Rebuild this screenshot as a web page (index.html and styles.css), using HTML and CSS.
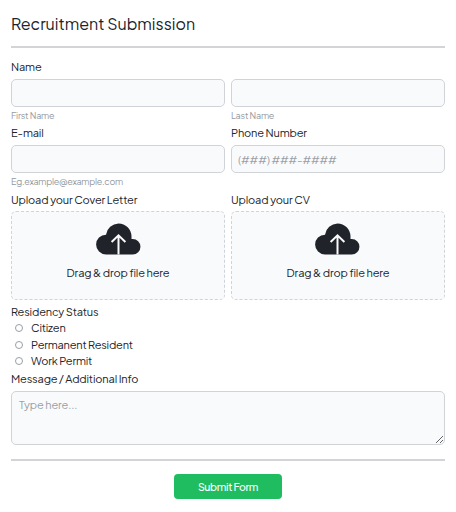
FILE: index.html
```html
<!DOCTYPE html>
<html lang="en">
<head>
    <meta charset="UTF-8">
    <meta name="viewport" content="width=device-width, initial-scale=1.0">
    <title>Recruitment Submission</title>
    <link rel="stylesheet" href="styles.css">
</head>
<body>

<form class="container">
    <h1>Recruitment Submission</h1>
    <hr>

    <div class="row names">
        <div class="field">
            <label for="firstName">Name</label>
            <input type="text" id="firstName">
            <small>First Name</small>
        </div>
        <div class="field">
            <label for="lastName">&nbsp;</label>
            <input type="text" id="lastName">
            <small>Last Name</small>
        </div>
    </div>

    <div class="row contact">
        <div class="field">
            <label for="email">E-mail</label>
            <input type="email" id="email">
            <small class="hint-email">Eg.example@example.com</small>
        </div>
        <div class="field">
            <label for="phone">Phone Number</label>
            <input type="tel" id="phone" placeholder="(###) ###-####">
        </div>
    </div>

    <div class="row uploads">
        <div class="field">
            <label>Upload your Cover Letter</label>
            <div class="dropzone">
                <svg class="cloud" viewBox="0 0 45 32">
                    <path fill="#20232a" d="M10 31.5A9.9 9.9 0 0 1 10 11.7A13 13 0 0 1 22.5 .5A13 13 0 0 1 35.5 13.5V16H36.7A7.75 7.75 0 0 1 36.7 31.5Z"/>
                    <path fill="none" stroke="#f9fafc" stroke-width="2" d="M22.5 31.5V12.5M15.6 19L22.5 12.3L29.4 19"/>
                </svg>
                <span>Drag &amp; drop file here</span>
            </div>
        </div>
        <div class="field">
            <label>Upload your CV</label>
            <div class="dropzone">
                <svg class="cloud cloud-cv" viewBox="0 0 45 32">
                    <path fill="#20232a" d="M10 31.5A9.9 9.9 0 0 1 10 11.7A13 13 0 0 1 22.5 .5A13 13 0 0 1 35.5 13.5V16H36.7A7.75 7.75 0 0 1 36.7 31.5Z"/>
                    <path fill="none" stroke="#f9fafc" stroke-width="2" d="M22.5 31.5V12.5M15.6 19L22.5 12.3L29.4 19"/>
                </svg>
                <span>Drag &amp; drop file here</span>
            </div>
        </div>
    </div>

    <div class="residency">
        <label>Residency Status</label>
        <div class="option"><input type="radio" name="status" id="citizen"><label for="citizen">Citizen</label></div>
        <div class="option"><input type="radio" name="status" id="resident"><label for="resident">Permanent Resident</label></div>
        <div class="option"><input type="radio" name="status" id="permit"><label for="permit">Work Permit</label></div>
    </div>

    <div class="field">
        <label for="message">Message / Additional Info</label>
        <textarea id="message" placeholder="Type here..."></textarea>
    </div>

    <hr>
    <button type="button" class="submit-btn">Submit Form</button>
</form>

</body>
</html>
```

FILE: styles.css
```css
* {
    box-sizing: border-box;
}

body {
    font-family: "Plus Jakarta Sans", Inter, sans-serif;
    font-size: 11px;
    letter-spacing: -0.16px;
    margin: 0;
    background-color: #fff;
    color: #20232a;
}

.container {
    padding: 12px 11px 0;
}

h1 {
    margin: 0 0 10px;
    font-size: 16px;
    font-weight: 400;
    line-height: 24px;
    letter-spacing: 0;
}

hr {
    height: 2px;
    margin: 0;
    border: none;
    background-color: #d3d3d8;
}

.row {
    display: grid;
    grid-template-columns: 1fr 1fr;
    gap: 6px;
}

.names {
    height: 66px;
    margin-top: 11px;
}

.contact {
    height: 67px;
}

.uploads {
    height: 112px;
}

.field {
    display: flex;
    flex-direction: column;
}

label {
    line-height: 16px;
    white-space: nowrap;
}

input, textarea {
    font-family: inherit;
    font-size: 11px;
    letter-spacing: -0.16px;
    color: #20232a;
    border: 1px solid #d0d3d8;
    border-radius: 5px;
    background-color: #f9fafc;
}

.field input {
    width: 100%;
    height: 28px;
    margin: 4px 0 2px;
    padding: 0 6px;
}

::placeholder {
    color: #9a9fa4;
    opacity: 1;
}

small {
    font-size: 9px;
    line-height: 14px;
    letter-spacing: -0.2px;
    color: #959ba1;
}

.hint-email {
    letter-spacing: -0.26px;
}

.dropzone {
    display: flex;
    flex-direction: column;
    align-items: center;
    height: 89px;
    margin-top: 3px;
    padding-top: 11px;
    border: 1px dashed #ced4da;
    border-radius: 5px;
    background-color: #f9fafc;
}

.cloud {
    width: 45px;
    height: 32px;
    margin-left: 1px;
}

.cloud-cv {
    margin: 0 1px 0 0;
}

.dropzone span {
    margin-top: 10px;
    line-height: 16px;
}

.residency {
    display: flex;
    flex-direction: column;
    height: 67px;
}

.option {
    display: flex;
    align-items: center;
    height: 16.5px;
}

.option label {
    letter-spacing: -0.2px;
}

.option input {
    appearance: none;
    width: 8px;
    height: 8px;
    margin: 0 8px 0 4px;
    border: 1px solid #9aa0a6;
    border-radius: 50%;
    background-color: #fff;
}

textarea {
    width: 100%;
    height: 54px;
    margin: 4px 0 14px;
    padding: 5px 7px;
    line-height: 15px;
    resize: vertical;
}

.submit-btn {
    display: block;
    width: 108px;
    height: 25px;
    margin: 13px auto 0;
    padding: 0;
    font-family: inherit;
    font-size: 10.5px;
    font-weight: 500;
    letter-spacing: -0.35px;
    color: #fff;
    border: none;
    border-radius: 4px;
    background-color: #1fbd5f;
    cursor: pointer;
}
```
